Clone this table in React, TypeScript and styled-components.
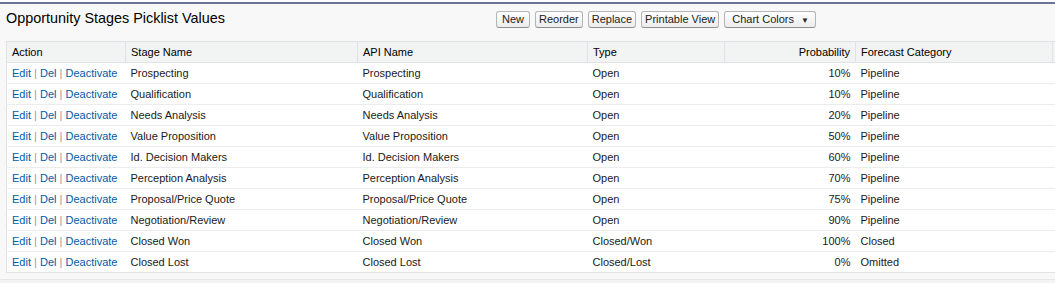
import styled, { createGlobalStyle } from "styled-components";

const GlobalStyle = createGlobalStyle`
  html, body {
    margin: 0;
    padding: 0;
    background: #ffffff;
    font-family: "Liberation Sans", Arial, sans-serif;
    overflow: hidden;
  }
`;

interface Stage {
  name: string;
  type: string;
  probability: string;
  forecast: string;
}

const stages: Stage[] = [
  { name: "Prospecting", type: "Open", probability: "10%", forecast: "Pipeline" },
  { name: "Qualification", type: "Open", probability: "10%", forecast: "Pipeline" },
  { name: "Needs Analysis", type: "Open", probability: "20%", forecast: "Pipeline" },
  { name: "Value Proposition", type: "Open", probability: "50%", forecast: "Pipeline" },
  { name: "Id. Decision Makers", type: "Open", probability: "60%", forecast: "Pipeline" },
  { name: "Perception Analysis", type: "Open", probability: "70%", forecast: "Pipeline" },
  { name: "Proposal/Price Quote", type: "Open", probability: "75%", forecast: "Pipeline" },
  { name: "Negotiation/Review", type: "Open", probability: "90%", forecast: "Pipeline" },
  { name: "Closed Won", type: "Closed/Won", probability: "100%", forecast: "Closed" },
  { name: "Closed Lost", type: "Closed/Lost", probability: "0%", forecast: "Omitted" },
];

const Page = styled.div`
  padding-top: 2px;
  width: 1100px;
`;

const Block = styled.div`
  background: #f8f8f8;
  border-top: 2px solid #6c7396;
  border-bottom: 1px solid #e6e6e6;
  padding: 0 0 6px 0;
`;

const Header = styled.div`
  display: flex;
  align-items: flex-start;
  height: 37px;
  box-sizing: border-box;
  padding: 5px 6px 0 6px;
`;

const Title = styled.h3`
  margin: 0;
  width: 490px;
  font-size: 14.4px;
  line-height: 18px;
  font-weight: normal;
  color: #000000;
`;

const Buttons = styled.div`
  display: flex;
  gap: 5px;
  margin-top: 2px;
`;

const Button = styled.button<{ $wide?: boolean }>`
  font-family: "Liberation Sans", Arial, sans-serif;
  font-size: 11px;
  font-weight: normal;
  color: #222222;
  min-width: 34px;
  height: 17px;
  padding: ${(p) => (p.$wide ? "0 6px 0 7px" : "0 3px")};
  border: 1px solid #b5b5b5;
  border-bottom-color: #8f8f8f;
  border-radius: 3px;
  background: linear-gradient(#ffffff, #ececec);
  line-height: 15px;
`;

const Caret = styled.span`
  font-size: 8px;
  margin-left: 7px;
`;

const Table = styled.table`
  margin-left: 6px;
  border-collapse: collapse;
  background: #ffffff;
  border: 1px solid #e0e3e5;
  table-layout: fixed;
  width: 1090px;
`;

const HeadCell = styled.th<{ $w?: number; $right?: boolean }>`
  box-sizing: border-box;
  width: ${(p) => (p.$w ? `${p.$w}px` : "auto")};
  height: 21px;
  padding: 0 5px;
  background: #f2f3f3;
  border-left: 1px solid #e0e3e5;
  border-bottom: 1px solid #e0e3e5;
  font-size: 11px;
  font-weight: normal;
  color: #000000;
  text-align: ${(p) => (p.$right ? "right" : "left")};
  white-space: nowrap;
  &:first-child {
    border-left: none;
  }
`;

const Row = styled.tr`
  border-bottom: 1px solid #ececec;
  &:last-child {
    border-bottom: none;
  }
`;

const Cell = styled.td<{ $right?: boolean }>`
  box-sizing: border-box;
  height: 21px;
  padding: 0 5px;
  font-size: 11px;
  color: #1a1a1a;
  text-align: ${(p) => (p.$right ? "right" : "left")};
  white-space: nowrap;
  overflow: hidden;
`;

const Link = styled.a`
  color: #015ba7;
  text-decoration: none;
`;

const Sep = styled.span`
  color: #999999;
`;

const Bottom = styled.div`
  height: 6px;
  background: #f3f3f3;
  border-bottom: 1px solid #e2e2e2;
`;

export default function App() {
  return (
    <>
      <GlobalStyle />
      <Page>
        <Block>
          <Header>
            <Title>Opportunity Stages Picklist Values</Title>
            <Buttons>
              <Button>New</Button>
              <Button>Reorder</Button>
              <Button>Replace</Button>
              <Button>Printable View</Button>
              <Button $wide>
                Chart Colors<Caret>▼</Caret>
              </Button>
            </Buttons>
          </Header>
          <Table>
            <thead>
              <tr>
                <HeadCell $w={119}>Action</HeadCell>
                <HeadCell $w={232}>Stage Name</HeadCell>
                <HeadCell $w={230}>API Name</HeadCell>
                <HeadCell $w={137}>Type</HeadCell>
                <HeadCell $w={131} $right>
                  Probability
                </HeadCell>
                <HeadCell $w={197}>Forecast Category</HeadCell>
                <HeadCell></HeadCell>
              </tr>
            </thead>
            <tbody>
              {stages.map((s) => (
                <Row key={s.name}>
                  <Cell>
                    <Link href="#">Edit</Link> <Sep>|</Sep> <Link href="#">Del</Link>{" "}
                    <Sep>|</Sep> <Link href="#">Deactivate</Link>
                  </Cell>
                  <Cell>{s.name}</Cell>
                  <Cell>{s.name}</Cell>
                  <Cell>{s.type}</Cell>
                  <Cell $right>{s.probability}</Cell>
                  <Cell>{s.forecast}</Cell>
                  <Cell></Cell>
                </Row>
              ))}
            </tbody>
          </Table>
        </Block>
        <Bottom />
      </Page>
    </>
  );
}
